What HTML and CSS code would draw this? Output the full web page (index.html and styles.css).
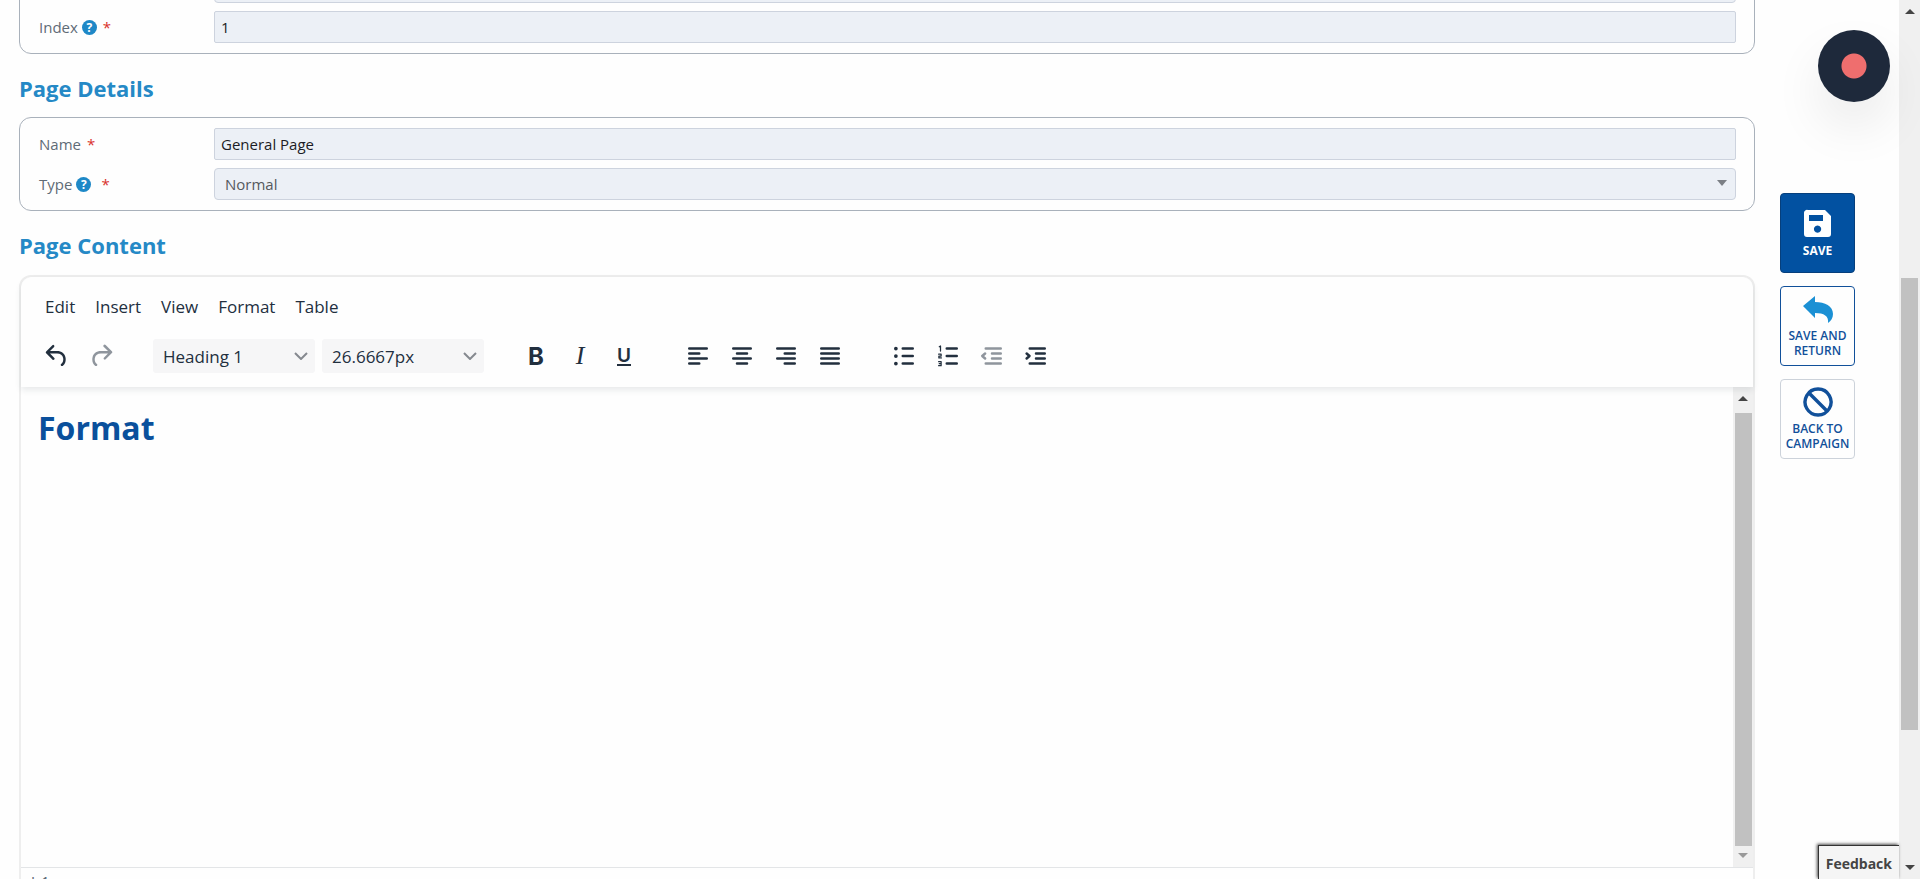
FILE: index.html
```html
<!DOCTYPE html>
<html lang="en">
<head>
    <meta charset="UTF-8">
    <meta name="viewport" content="width=device-width, initial-scale=1.0">
    <title>General Page</title>
    <link rel="stylesheet" href="styles.css">
</head>
<body>
    <form class="page">
        <main class="content">
            <section class="panel">
                <div class="row">
                    <label for="parent"></label>
                    <div class="select-wrap"><select id="parent"></select></div>
                </div>
                <div class="row">
                    <div class="label">
                        <label for="index">Index</label>
                        <button type="button" class="help" aria-label="Help for index">?</button>
                        <span class="required">*</span>
                    </div>
                    <input type="text" id="index" value="1">
                </div>
            </section>

            <h2>Page Details</h2>
            <section class="panel">
                <div class="row">
                    <div class="label">
                        <label for="name">Name</label>
                        <span class="required">*</span>
                    </div>
                    <input type="text" id="name" value="General Page">
                </div>
                <div class="row">
                    <div class="label">
                        <label for="type">Type</label>
                        <button type="button" class="help" aria-label="Help for type">?</button>
                        <span class="required spaced">*</span>
                    </div>
                    <div class="select-wrap">
                        <select id="type"><option>Normal</option></select>
                        <svg class="caret" viewBox="0 0 10 6"><path d="M0 0h10L5 6z"/></svg>
                    </div>
                </div>
            </section>

            <h2>Page Content</h2>
            <section class="editor">
                <div class="editor-header">
                    <nav class="menubar">
                        <button type="button">Edit</button>
                        <button type="button">Insert</button>
                        <button type="button">View</button>
                        <button type="button">Format</button>
                        <button type="button">Table</button>
                    </nav>
                    <div class="toolbar">
                        <div class="group">
                            <button type="button" aria-label="Undo"><svg viewBox="0 0 24 24"><path d="M6.4 8H12c3.7 0 6.2 2 6.8 5.1.6 2.7-.4 5.6-2.3 6.8a1 1 0 0 1-1-1.8c1.1-.6 1.8-2.7 1.4-4.6-.5-2.1-2.1-3.5-4.9-3.5H6.4l3.3 3.3a1 1 0 1 1-1.4 1.4l-5-5a1 1 0 0 1 0-1.4l5-5a1 1 0 0 1 1.4 1.4L6.4 8Z"/></svg></button>
                            <button type="button" aria-label="Redo" disabled><svg viewBox="0 0 24 24"><path d="M17.6 10H12c-2.8 0-4.4 1.4-4.9 3.5-.4 2 .3 4 1.4 4.6a1 1 0 1 1-1 1.8c-2-1.2-2.9-4.1-2.3-6.8.6-3 3-5.1 6.8-5.1h5.6l-3.3-3.3a1 1 0 1 1 1.4-1.4l5 5a1 1 0 0 1 0 1.4l-5 5a1 1 0 0 1-1.4-1.4l3.3-3.3Z"/></svg></button>
                        </div>
                        <div class="group selects">
                            <div class="tool-select">
                                <select aria-label="Block format"><option>Heading 1</option></select>
                                <svg viewBox="0 0 14 8"><path d="M1 1l6 6 6-6"/></svg>
                            </div>
                            <div class="tool-select">
                                <select aria-label="Font size"><option>26.6667px</option></select>
                                <svg viewBox="0 0 14 8"><path d="M1 1l6 6 6-6"/></svg>
                            </div>
                        </div>
                        <div class="group">
                            <button type="button" class="bold">B</button>
                            <button type="button" class="italic">I</button>
                            <button type="button" class="underline"><span>U</span></button>
                        </div>
                        <div class="group">
                            <button type="button" aria-label="Align left"><svg class="lines" viewBox="0 0 24 24"><path d="M5 6h14M5 10h8M5 14h14M5 18h8"/></svg></button>
                            <button type="button" aria-label="Align center"><svg class="lines" viewBox="0 0 24 24"><path d="M5 6h14M8 10h8M5 14h14M8 18h8"/></svg></button>
                            <button type="button" aria-label="Align right"><svg class="lines" viewBox="0 0 24 24"><path d="M5 6h14M11 10h8M5 14h14M11 18h8"/></svg></button>
                            <button type="button" aria-label="Justify"><svg class="lines" viewBox="0 0 24 24"><path d="M5 6h14M5 10h14M5 14h14M5 18h14"/></svg></button>
                        </div>
                        <div class="group">
                            <button type="button" aria-label="Bullet list"><svg class="lines" viewBox="0 0 24 24"><path d="M11 6h8M11 12h8M11 18h8"/><path class="dots" d="M5.500 6h0M5.500 12h0M5.500 18h0"/></svg></button>
                            <button type="button" aria-label="Numbered list"><svg class="lines" viewBox="0 0 24 24"><path d="M11 6h8M11 12h8M11 18h8"/><path class="digits" d="M5 4.600l1-.6v4M4.500 10.500h2v1.500h-1.800v1.500h2M4.500 16.500h2v3.200h-2M5 18.100h1.500"/></svg></button>
                            <button type="button" aria-label="Decrease indent" disabled><svg class="lines" viewBox="0 0 24 24"><path d="M7 6h12M12 10h7M12 14h7M7 18h12M6.500 10l-2.300 2 2.300 2"/></svg></button>
                            <button type="button" aria-label="Increase indent"><svg class="lines" viewBox="0 0 24 24"><path d="M7 6h12M12 10h7M12 14h7M7 18h12M4.500 10l2.300 2-2.300 2"/></svg></button>
                        </div>
                    </div>
                </div>
                <div class="editor-body">
                    <div class="document" contenteditable="true"><h1>Format</h1></div>
                    <div class="scrollbar">
                        <svg class="arrow" viewBox="0 0 10 5"><path d="M0 5h10L5 0z"/></svg>
                        <div class="thumb"></div>
                        <svg class="arrow end" viewBox="0 0 10 5"><path d="M0 0h10L5 5z"/></svg>
                    </div>
                </div>
                <div class="statusbar">h1</div>
            </section>
        </main>

        <aside class="actions">
            <button type="submit" class="action primary">
                <svg viewBox="0 0 30 30"><path fill="currentColor" fill-rule="evenodd" d="M5 1h17l6 6v18a3 3 0 0 1-3 3H4a3 3 0 0 1-3-3V4a3 3 0 0 1 4-3zM6 6v6h14V6zM14.500 16.500a3.600 3.600 0 1 0 .1 0z"/></svg>
                Save
            </button>
            <button type="button" class="action outline">
                <svg viewBox="0 0 30 30"><path fill="#1b90d4" d="M0 12L12 2v6c10 0 18 4 18 12 0 4-2 7-5 9 1-7-4-10-13-10v5z"/></svg>
                Save and<br>Return
            </button>
            <button type="button" class="action">
                <svg viewBox="0 0 30 30"><path fill="none" stroke="currentColor" stroke-width="3.400" d="M15 2a13 13 0 1 0 .1 0zM6 6l18 18"/></svg>
                Back to<br>Campaign
            </button>
        </aside>

        <div class="scrollbar page-scrollbar">
            <svg class="arrow" viewBox="0 0 10 5"><path d="M0 5h10L5 0z"/></svg>
            <div class="thumb"></div>
            <svg class="arrow" viewBox="0 0 10 5"><path d="M0 0h10L5 5z"/></svg>
        </div>
    </form>

    <button class="record" aria-label="Record"></button>
    <button class="feedback">Feedback</button>
</body>
</html>
```
FILE: styles.css
```css
/* General Styles */
* {
    box-sizing: border-box;
}

body {
    font-family: 'Open Sans', sans-serif;
    font-size: 15px;
    color: #5f6b76;
    background: #fefefe;
    margin: 0;
    height: 100vh;
    overflow: hidden;
}

button,
input,
select {
    font: inherit;
    color: inherit;
    margin: 0;
}

button {
    border: none;
    background: none;
    padding: 0;
    cursor: pointer;
}

.page {
    display: flex;
    height: 100vh;
    padding-left: 19px;
}

/* The form is scrolled part of the way down */
.content {
    flex: 1;
    min-width: 0;
    margin-top: -40px;
}

/* Headings */
h2 {
    font-size: 22px;
    line-height: 32px;
    font-weight: 700;
    color: #2589c6;
    margin: 18px 0 13px;
}

/* Form panels */
.panel {
    display: flex;
    flex-direction: column;
    gap: 8px;
    padding: 10px 18px;
    border: 1px solid #a9b1bb;
    border-radius: 12px;
}

.row {
    display: grid;
    grid-template-columns: 176px 1fr;
    align-items: center;
    height: 32px;
}

.label {
    display: flex;
    align-items: center;
    padding-left: 1px;
}

.help {
    width: 15px;
    height: 15px;
    margin-left: 4px;
    border-radius: 50%;
    background: #1e88c7;
    color: #fff;
    font-size: 12px;
    font-weight: 700;
    line-height: 15px;
}

.required {
    color: #d9302c;
    margin-left: 6px;
}

.required.spaced {
    margin-left: 10px;
}

.row input,
.row select {
    width: 100%;
    height: 32px;
    padding: 0 6px;
    border: 1px solid #cdd3de;
    border-radius: 2px;
    background: #ecf0f6;
    color: #1c1c24;
}

.row select {
    appearance: none;
    padding: 0 10px;
    border-radius: 4px;
    color: #55595e;
}

.select-wrap {
    position: relative;
}

.caret {
    position: absolute;
    right: 9px;
    top: 12px;
    width: 10px;
    height: 6px;
    fill: #7b7f85;
}

/* Editor */
.editor {
    margin-top: 14px;
    border: 2px solid #eee;
    border-radius: 12px;
}

.editor-header {
    position: relative;
    height: 110px;
    padding: 12px 16px;
    background: #fefefe;
    border-radius: 12px 12px 0 0;
    box-shadow: 0 3px 6px rgba(34, 47, 62, 0.1);
    color: #222f3e;
    font-size: 17px;
}

.menubar {
    display: flex;
    gap: 20px;
    padding-left: 8px;
    height: 34px;
}

.toolbar {
    display: flex;
    gap: 30px;
    height: 34px;
    margin-top: 16px;
    margin-left: -2px;
}

.group {
    display: flex;
}

.group.selects {
    gap: 7px;
}

.group button {
    display: flex;
    align-items: center;
    justify-content: center;
    width: 44px;
    height: 34px;
}

.group button:disabled {
    opacity: 0.5;
}

.group button svg {
    width: 30px;
    height: 30px;
    fill: currentColor;
}

.group button .lines {
    fill: none;
    stroke: currentColor;
    stroke-width: 2;
    stroke-linecap: round;
    stroke-linejoin: round;
}

.lines .dots {
    stroke-width: 3;
}

.lines .digits {
    stroke-width: 1;
}

.group .bold {
    font-family: Inter, sans-serif;
    font-size: 24px;
    font-weight: 700;
}

.group .italic {
    font-family: 'Liberation Serif', serif;
    font-size: 26px;
    font-style: italic;
}

.group .underline {
    font-family: Inter, sans-serif;
    font-size: 19px;
    font-weight: 600;
}

.underline span {
    line-height: 17px;
    border-bottom: 2px solid currentColor;
}

.tool-select {
    position: relative;
}

.tool-select select {
    appearance: none;
    width: 162px;
    height: 34px;
    padding: 0 10px;
    border: none;
    border-radius: 3px;
    background: #f6f6f7;
}

.tool-select svg {
    position: absolute;
    right: 7px;
    top: 13px;
    width: 14px;
    height: 8px;
    fill: none;
    stroke: #85898f;
    stroke-width: 2;
}

.editor-body {
    display: flex;
    height: 480px;
}

.document {
    flex: 1;
    padding: 19px 17px;
    outline: none;
}

.document h1 {
    margin: 0;
    font-size: 32px;
    line-height: 44px;
    font-weight: 700;
    color: #0a509c;
}

.statusbar {
    height: 32px;
    padding: 4px 10px;
    border-top: 1px solid #e3e5e7;
    font-size: 16px;
}

/* Scrollbars */
.scrollbar {
    display: flex;
    flex-direction: column;
    align-items: center;
    width: 20px;
    padding: 9px 0;
    background: #f0f0f0;
}

.scrollbar .arrow {
    width: 10px;
    height: 5px;
    fill: #444;
}

.scrollbar .arrow.end {
    fill: #999;
}

.scrollbar .thumb {
    flex: 1;
    width: 17px;
    margin: 12px 0 7px;
    background: #c1c1c1;
}

.page-scrollbar {
    justify-content: space-between;
    width: 21px;
}

.page-scrollbar .thumb {
    flex: none;
    height: 452px;
    margin: 129px 0 0;
}

/* Action buttons */
.actions {
    display: flex;
    flex-direction: column;
    gap: 13px;
    padding: 193px 44px 0 25px;
}

.action {
    display: flex;
    flex-direction: column;
    align-items: center;
    justify-content: center;
    width: 75px;
    height: 80px;
    border: 1px solid #ccd2da;
    border-radius: 4px;
    color: #11509a;
    font-size: 12px;
    line-height: 15px;
    font-weight: 600;
    text-transform: uppercase;
}

.action svg {
    width: 30px;
    height: 30px;
    margin-bottom: 4px;
}

.action.outline {
    border-color: #11509a;
}

.action.primary {
    background: #0251a1;
    border-color: #063f7c;
    color: #fff;
    font-weight: 700;
}

/* Floating buttons */
.record {
    position: absolute;
    top: 30px;
    right: 30px;
    width: 72px;
    height: 72px;
    border-radius: 50%;
    background: radial-gradient(circle, #ef6e6e 12px, #1e293b 13px);
    box-shadow: 0 25px 50px rgba(0, 0, 0, 0.08);
}

.feedback {
    position: absolute;
    right: 21px;
    bottom: 0;
    height: 34px;
    padding: 2px 7px 0;
    border: 1px solid #333;
    border-width: 1px 0 0 1px;
    background: #f5f5f5;
    box-shadow: -1px -1px 3px rgba(0, 0, 0, 0.7);
    color: #444;
    font-size: 14px;
    font-weight: 700;
}
```
